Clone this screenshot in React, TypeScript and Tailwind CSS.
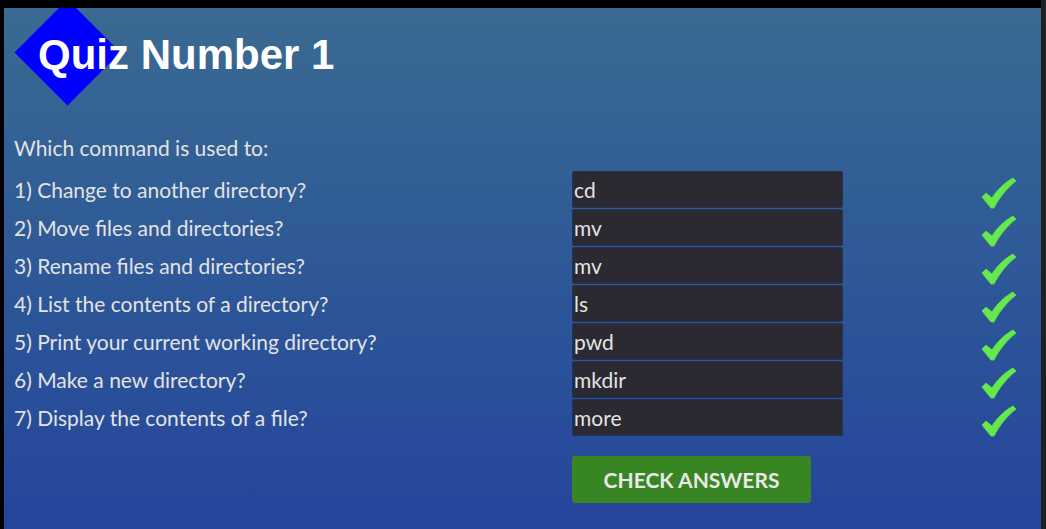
import { useState } from "react";

const questions = [
  { q: "1) Change to another directory?", a: "cd" },
  { q: "2) Move files and directories?", a: "mv" },
  { q: "3) Rename files and directories?", a: "mv" },
  { q: "4) List the contents of a directory?", a: "ls" },
  { q: "5) Print your current working directory?", a: "pwd" },
  { q: "6) Make a new directory?", a: "mkdir" },
  { q: "7) Display the contents of a file?", a: "more" },
];

const Check = () => (
  <svg width="38" height="34" viewBox="0 0 38 34">
    <path
      d="M2 21 L6 17 L12 22 C17 14 24 7 33 2 L36 5 C27 12 19 22 14 32 L11 32 Z"
      fill="#66e84f"
      stroke="#5fd64a"
      strokeWidth="1"
      strokeLinejoin="round"
    />
  </svg>
);

const App = () => {
  const [answers, setAnswers] = useState(questions.map((x) => x.a));

  return (
    <div className="flex h-[529px] w-[1046px] overflow-hidden bg-black font-['Lato',sans-serif]">
      {/* left edge */}
      <div className="w-[4px] shrink-0 bg-black" />

      <div className="flex flex-1 flex-col">
        <div className="h-[8px] shrink-0 bg-black" />

        {/* Main */}
        <div className="flex-1 overflow-hidden bg-gradient-to-b from-[#3a6a91] to-[#25449c] pl-[10px]">
          {/* Header */}
          <div className="relative h-[128px]">
            <div className="absolute left-[16px] top-[7px] h-[75px] w-[75px] rotate-45 bg-[#0000ff]" />
            <h1 className="relative pl-[24px] pt-[23px] font-['Liberation_Sans',Arial,sans-serif] text-[42px] font-bold leading-[48px] text-white">
              Quiz Number 1
            </h1>
          </div>

          <p className="text-[21px] leading-[24px] text-[#e3e3e3]">Which command is used to:</p>

          <div className="mt-[11px] flex flex-col gap-[1px]">
            {questions.map((item, i) => (
              <div key={i} className="flex h-[37px] items-center">
                <span className="w-[558px] pt-[1px] text-[21px] leading-[24px] text-[#e3e3e3]">{item.q}</span>
                <input
                  value={answers[i]}
                  onChange={(e) => {
                    const next = [...answers];
                    next[i] = e.target.value;
                    setAnswers(next);
                  }}
                  className="h-[37px] w-[271px] rounded-[2px] border border-[#22335a] bg-[#2b2a33] px-[1px] font-['Lato',sans-serif] text-[21px] text-[#e3e3e3] outline-none"
                />
                <span className="ml-[137px] flex h-[37px] items-center pt-[6px]">
                  <Check />
                </span>
              </div>
            ))}
          </div>

          <button className="ml-[558px] mt-[20px] h-[47px] w-[239px] rounded-[3px] bg-[#388524] text-[21px] font-bold text-[#e8e8e8]">
            CHECK ANSWERS
          </button>
        </div>
      </div>

      {/* right scrollbar strip */}
      <div className="w-[5px] shrink-0 bg-[#1f1f1f]" />
    </div>
  );
};

export default App;
